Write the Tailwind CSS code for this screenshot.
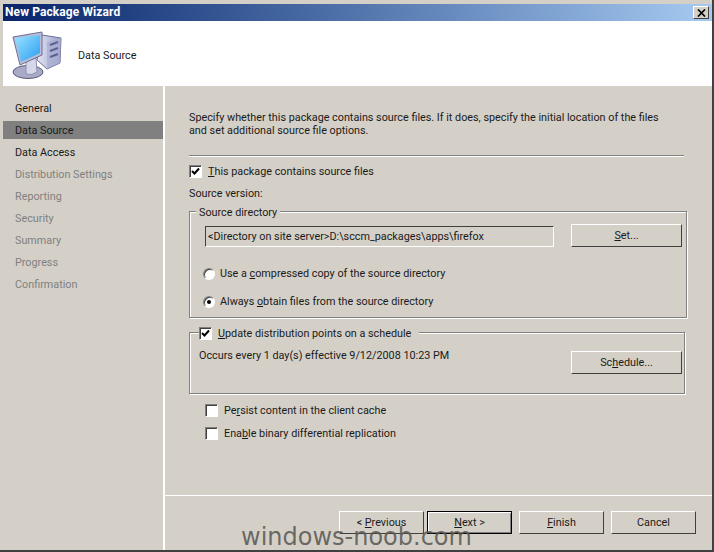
<!DOCTYPE html>
<html lang="en">
<head>
    <meta charset="UTF-8">
    <title>New Package Wizard</title>
    <script src="https://cdn.jsdelivr.net/npm/@tailwindcss/browser@4"></script>
</head>
<body class="bg-[#d4d0c8]">
    <div class="relative w-[714px] h-[552px] overflow-hidden bg-[#d4d0c8] font-['Roboto',sans-serif] text-[10.8px] leading-[13px] text-[#1a1a1a] flex flex-col pt-[4px] pl-[3px] pr-[2px] pb-[2px]">
        <!-- title bar -->
        <div class="h-[17px] shrink-0 flex items-center justify-between bg-gradient-to-r from-[#0a246a] to-[#a6caf0] pl-[2px] pr-[3px]">
            <span class="text-white font-bold text-[12px] tracking-[0.1px]">New Package Wizard</span>
            <div class="w-[16px] h-[13px] bg-[#d4d0c8] border border-t-white border-l-white border-r-[#404040] border-b-[#404040] flex items-center justify-center">
                <svg width="9" height="8" viewBox="0 0 9 8"><path d="M1 0.5 L8 7.5 M8 0.5 L1 7.5" stroke="#000" stroke-width="1.7" fill="none"/></svg>
            </div>
        </div>

        <!-- header -->
        <div class="h-[65px] shrink-0 bg-white flex items-center pl-[8px]">
            <svg width="52" height="48" viewBox="0 0 52 48" class="mt-[3px]">
                <defs>
                    <linearGradient id="scr" x1="0" y1="0" x2="1" y2="1"><stop offset="0" stop-color="#9be4ff"/><stop offset="1" stop-color="#2a9cf0"/></linearGradient>
                    <linearGradient id="twr" x1="0" y1="0" x2="1" y2="0"><stop offset="0" stop-color="#e4e7f4"/><stop offset="1" stop-color="#9a9fc8"/></linearGradient>
                </defs>
                <ellipse cx="17" cy="41" rx="15" ry="6.5" fill="#a9abc6" stroke="#55587e"/>
                <path d="M31 4 L50 7 L49 32 L36 38 L26 29 Z" fill="url(#twr)" stroke="#6a6d98"/>
                <path d="M36 11 L36 38 L49 32 L50 7 Z" fill="#a8acd2" opacity="0.7"/>
                <path d="M39 14 L47 11 M39 20 L47 17 M39 26 L47 23" stroke="#5d6190" stroke-width="2"/>
                <path d="M15 30 L25 27 L26 41 Q21 45 15 43 Z" fill="#d6d8e8" stroke="#8d90b5"/>
                <path d="M2 6 L31 1 L31 24 L9 34 Z" fill="#b9bdd6" stroke="#6a6d98"/>
                <path d="M4 7 L29 4 L29 22 L10 31 Z" fill="url(#scr)"/>
            </svg>
            <span class="ml-[15px] mt-[3px]">Data Source</span>
        </div>

        <div class="flex-1 flex min-h-0">
            <!-- steps -->
            <nav class="w-[160px] shrink-0 pt-[13px]">
                <div class="h-[18px] mb-[4px] flex items-center pl-[12px]">General</div>
                <div class="h-[18px] mb-[4px] flex items-center pl-[12px] bg-[#808080]">Data Source</div>
                <div class="h-[18px] mb-[4px] flex items-center pl-[12px]">Data Access</div>
                <div class="h-[18px] mb-[4px] flex items-center pl-[12px] text-[#808080]">Distribution Settings</div>
                <div class="h-[18px] mb-[4px] flex items-center pl-[12px] text-[#808080]">Reporting</div>
                <div class="h-[18px] mb-[4px] flex items-center pl-[12px] text-[#808080]">Security</div>
                <div class="h-[18px] mb-[4px] flex items-center pl-[12px] text-[#808080]">Summary</div>
                <div class="h-[18px] mb-[4px] flex items-center pl-[12px] text-[#808080]">Progress</div>
                <div class="h-[18px] mb-[4px] flex items-center pl-[12px] text-[#808080]">Confirmation</div>
            </nav>
            <div class="w-[2px] shrink-0 bg-white"></div>

            <!-- page -->
            <div class="flex-1 flex flex-col min-w-0">
                <div class="h-[409px] shrink-0 pl-[24px] pt-[25px]">
                    <p class="w-[482px]">Specify whether this package contains source files. If it does, specify the initial location of the files and set additional source file options.</p>
                    <div class="w-[495px] h-[2px] mt-[18px] border-t border-[#808080] border-b border-b-white"></div>

                    <div class="flex items-center mt-[8px] h-[13px]">
                        <span class="w-[13px] h-[13px] bg-white border border-t-[#808080] border-l-[#808080] border-r-white border-b-white shadow-[inset_1px_1px_0_#404040] flex items-center justify-center">
                            <svg width="9" height="9" viewBox="0 0 9 9"><path d="M1 4 L3.5 6.5 L8 1.5" stroke="#000" stroke-width="2" fill="none"/></svg>
                        </span>
                        <span class="ml-[6px]"><u>T</u>his package contains source files</span>
                    </div>
                    <div class="mt-[9px]">Source version:</div>

                    <!-- source directory group -->
                    <div class="relative w-[498px] h-[107px] mt-[11px] border border-[#808080] shadow-[inset_1px_1px_0_#fff,1px_1px_0_#fff] pl-[15px] pr-[4px] pt-[12px]">
                        <span class="absolute left-[6px] -top-[6px] bg-[#d4d0c8] px-[3px]">Source directory</span>
                        <div class="flex items-start">
                            <div class="w-[349px] shrink-0 h-[21px] mt-[2px] border border-t-[#404040] border-l-[#404040] border-r-white border-b-white flex items-center pl-[2px] whitespace-nowrap">&lt;Directory on site server&gt;D:\sccm_packages\apps\firefox</div>
                            <button class="w-[111px] shrink-0 h-[23px] ml-[17px] bg-[#d4d0c8] border border-t-white border-l-white border-r-[#404040] border-b-[#404040]"><u>S</u>et...</button>
                        </div>
                        <div class="flex items-center mt-[20px] -ml-[2px] h-[13px]">
                            <span class="w-[12px] h-[12px] rounded-full bg-white border border-t-[#808080] border-l-[#808080] border-r-white border-b-white shadow-[inset_1px_1px_0_#404040]"></span>
                            <span class="ml-[5px]">Use a <u>c</u>ompressed copy of the source directory</span>
                        </div>
                        <div class="flex items-center mt-[15px] -ml-[2px] h-[13px]">
                            <span class="w-[12px] h-[12px] rounded-full bg-white border border-t-[#808080] border-l-[#808080] border-r-white border-b-white shadow-[inset_1px_1px_0_#404040] flex items-center justify-center"><span class="w-[4px] h-[4px] rounded-full bg-black"></span></span>
                            <span class="ml-[5px]">Always <u>o</u>btain files from the source directory</span>
                        </div>
                    </div>

                    <!-- schedule group -->
                    <div class="relative w-[496px] h-[62px] mt-[14px] border border-[#808080] shadow-[inset_1px_1px_0_#fff,1px_1px_0_#fff] pl-[9px] pt-[18px]">
                        <div class="absolute left-[9px] -top-[6px] flex items-center bg-[#d4d0c8] pr-[8px] h-[13px]">
                            <span class="w-[13px] h-[13px] bg-white border border-t-[#808080] border-l-[#808080] border-r-white border-b-white shadow-[inset_1px_1px_0_#404040] flex items-center justify-center">
                                <svg width="9" height="9" viewBox="0 0 9 9"><path d="M1 4 L3.5 6.5 L8 1.5" stroke="#000" stroke-width="2" fill="none"/></svg>
                            </span>
                            <span class="ml-[6px]"><u>U</u>pdate distribution points on a schedule</span>
                        </div>
                        <div class="flex items-start justify-between pr-[2px]">
                            <span class="-mt-[2px]">Occurs every 1 day(s) effective 9/12/2008 10:23 PM</span>
                            <button class="w-[111px] h-[23px] bg-[#d4d0c8] border border-t-white border-l-white border-r-[#404040] border-b-[#404040]">Sc<u>h</u>edule...</button>
                        </div>
                    </div>

                    <div class="flex items-center mt-[10px] ml-[16px] h-[13px]">
                        <span class="w-[13px] h-[13px] bg-white border border-t-[#808080] border-l-[#808080] border-r-white border-b-white shadow-[inset_1px_1px_0_#404040]"></span>
                        <span class="ml-[6px]">Pe<u>r</u>sist content in the client cache</span>
                    </div>
                    <div class="flex items-center mt-[10px] ml-[16px] h-[13px]">
                        <span class="w-[13px] h-[13px] bg-white border border-t-[#808080] border-l-[#808080] border-r-white border-b-white shadow-[inset_1px_1px_0_#404040]"></span>
                        <span class="ml-[6px]">Ena<u>b</u>le binary differential replication</span>
                    </div>
                </div>

                <!-- button strip -->
                <div class="flex-1 border-t border-t-white flex items-start pl-[174px] pt-[15px]">
                    <button class="w-[85px] h-[23px] bg-[#d4d0c8] border border-t-white border-l-white border-r-[#404040] border-b-[#404040]">&lt; <u>P</u>revious</button>
                    <button class="w-[85px] h-[23px] ml-[3px] bg-[#d4d0c8] border border-black shadow-[inset_1px_1px_0_#fff,inset_-1px_-1px_0_#808080]"><u>N</u>ext &gt;</button>
                    <button class="w-[85px] h-[23px] ml-[7px] bg-[#d4d0c8] border border-t-white border-l-white border-r-[#404040] border-b-[#404040]"><u>F</u>inish</button>
                    <button class="w-[85px] h-[23px] ml-[7px] bg-[#d4d0c8] border border-t-white border-l-white border-r-[#404040] border-b-[#404040]">Cancel</button>
                </div>
            </div>
        </div>

        <!-- right and bottom window edge -->
        <div class="absolute right-0 top-0 bottom-0 w-[2px] bg-[#404040]"></div>
        <div class="absolute left-0 right-0 bottom-0 h-[2px] bg-[#404040]"></div>

        <!-- watermark -->
        <span class="absolute left-[241px] top-[519px] font-['DejaVu_Sans',sans-serif] text-[24px] leading-[36px] text-[#5c5a55]/90 whitespace-nowrap">windows-noob.com</span>
    </div>
</body>
</html>
